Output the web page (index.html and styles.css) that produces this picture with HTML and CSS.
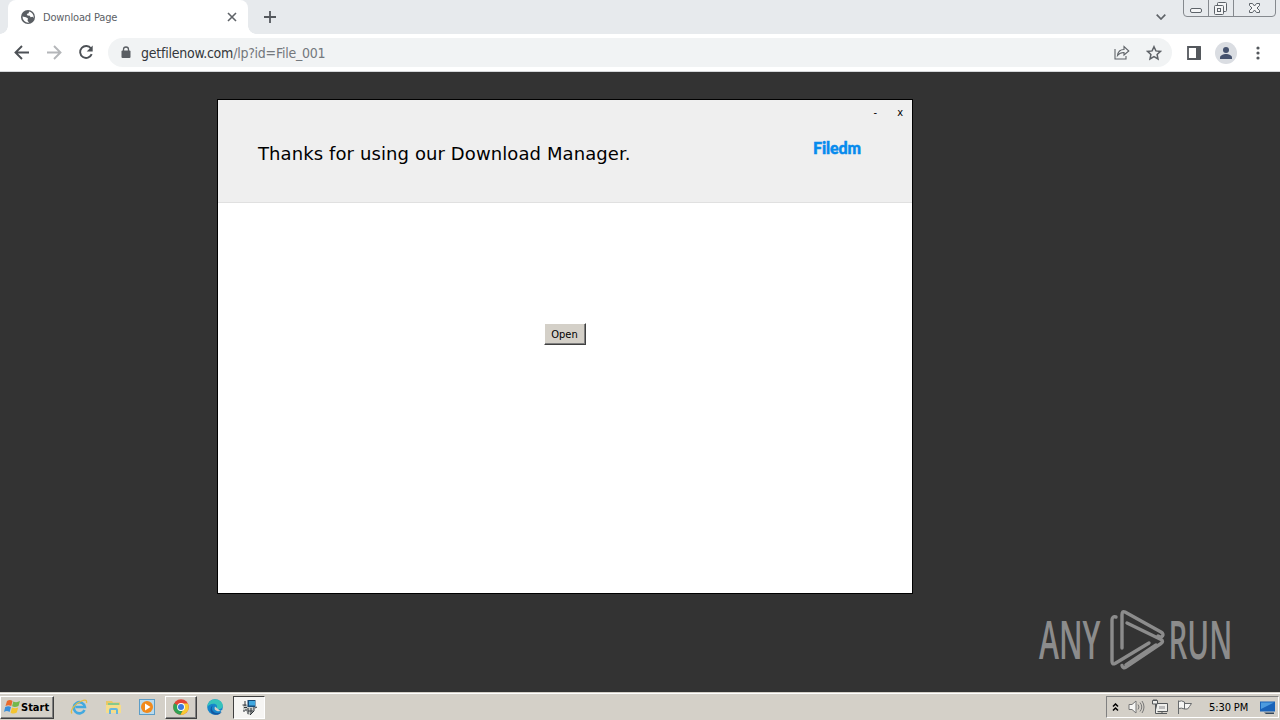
FILE: index.html
```
<!DOCTYPE html>
<html lang="en">
<head>
    <meta charset="UTF-8">
    <title>Download Page</title>
    <link rel="stylesheet" href="styles.css">
</head>
<body>
    <header class="tabstrip">
        <div class="tab">
            <svg class="globe" width="14" height="14" viewBox="0 0 14 14">
                <circle cx="7" cy="7" r="7" fill="#5a5e63"/>
                <path d="M1.500 6.500l3.500.7 2 1.200-.5 2L8 12.700A6 6 0 0 1 1.500 6.500zM8 1.500l-.3 1.700-2 .8.800 1.600 2.300.1.800 1.500 2-.5 1.100 1.200A6 6 0 0 0 8 1.500z" fill="#fff"/>
            </svg>
            <span class="tab-title">Download Page</span>
            <svg class="tab-close" width="10" height="10" viewBox="0 0 10 10"><path d="M1 1l8 8M9 1l-8 8" stroke="#5f6368" stroke-width="1.6"/></svg>
        </div>
        <svg class="new-tab" width="12" height="12" viewBox="0 0 12 12"><path d="M6 0v12M0 6h12" stroke="#54585d" stroke-width="1.8"/></svg>
        <svg class="tab-search" width="10" height="6" viewBox="0 0 10 6"><path d="M.7.7L5 5 9.300.7" fill="none" stroke="#5f6368" stroke-width="1.7"/></svg>
        <svg class="caption-buttons" width="94" height="18" viewBox="0 0 94 18">
            <path d="M.5 0v13q0 3.500 3.500 3.500h85q3.500 0 3.500-3.500V0M25.500 0v16M50.500 0v16" fill="none" stroke="#85898e"/>
            <g fill="#f4f5f6" stroke="#5d6369">
                <rect x="7.500" y="8.500" width="11" height="4" rx="1.500"/>
                <rect x="34.500" y="2.500" width="9" height="9" rx="1"/>
                <rect x="31.500" y="5.500" width="9" height="9" rx="1"/>
                <rect x="34.500" y="8.500" width="3" height="3"/>
                <path d="M66.500 3.500h3l2 2.500 2-2.500h3v2l-2.500 2.500 2.500 2.500v2h-3l-2-2.500-2 2.500h-3v-2l2.500-2.500-2.500-2.500z"/>
            </g>
        </svg>
    </header>
    <nav class="toolbar">
        <svg class="nav-icons" width="100" height="36" viewBox="0 0 100 36" fill="none" stroke-width="1.9">
            <path d="M29 17.500H16M22 11l-6.500 6.500L22 24" stroke="#4d5156"/>
            <path d="M47 17.500h13M54 11l6.500 6.500L54 24" stroke="#b4b6b9"/>
            <path d="M91 13.500a6 6 0 1 0 .7 5.700" stroke="#4d5156"/>
            <path d="M92.700 10.500v6h-6z" fill="#4d5156"/>
        </svg>
        <div class="omnibox">
            <svg class="lock" width="10" height="13" viewBox="0 0 10 13"><rect x=".5" y="4.500" width="9" height="7.500" rx="1" fill="#5a5e63"/><path d="M2.500 5V3.500a2.500 2.500 0 0 1 5 0V5" fill="none" stroke="#5a5e63" stroke-width="1.300"/></svg>
            <span class="url"><b>getfilenow.com</b>/lp?id=File_001</span>
            <svg class="share" width="16" height="15" viewBox="0 0 16 15" fill="none" stroke="#5f6368" stroke-width="1.100"><path d="M1 4v10h11v-3M3.500 10.500C4 6.500 6.500 4.500 10 4.500V1.500L14.800 6 10 10V7.500C7 7.500 5 8.500 3.500 10.500z"/></svg>
            <svg class="star" width="16" height="16" viewBox="0 0 16 16"><path d="M8 1.700l1.900 4.200 4.600.5-3.400 3.100.9 4.500-4-2.300-4 2.300.9-4.500L1.500 6.400l4.600-.5z" fill="none" stroke="#5f6368" stroke-width="1.500"/></svg>
        </div>
        <svg class="panel" width="14" height="14" viewBox="0 0 14 14"><path d="M1 1h12v12H1z" fill="none" stroke="#54585d" stroke-width="1.800"/><path d="M9 1h5v12H9z" fill="#54585d"/></svg>
        <svg class="avatar" width="22" height="22" viewBox="0 0 22 22"><circle cx="11" cy="11" r="11" fill="#dadde2"/><circle cx="11" cy="8" r="3" fill="#45526e"/><path d="M5 17v-1.500c0-2.300 3.500-3.500 6-3.500s6 1.200 6 3.500V17z" fill="#45526e"/></svg>
        <svg class="menu-dots" width="4" height="14" viewBox="0 0 4 14" fill="#54585d"><circle cx="2" cy="2" r="1.600"/><circle cx="2" cy="7" r="1.600"/><circle cx="2" cy="12" r="1.600"/></svg>
    </nav>
    <main class="desktop">
        <section class="dialog">
            <div class="dialog-head">
                <h1>Thanks for using our Download Manager.</h1>
                <div class="brand">Filedm</div>
                <div class="window-controls"><span>-</span><span>x</span></div>
            </div>
            <div class="dialog-body"><button>Open</button></div>
        </section>
        <svg class="watermark" width="194" height="64" viewBox="0 0 194 64">
            <g class="watermark-text">
                <text transform="translate(1 50) scale(.58 1)" textLength="106" lengthAdjust="spacingAndGlyphs">ANY</text>
                <text transform="translate(130.500 50) scale(.58 1)" textLength="110" lengthAdjust="spacingAndGlyphs">RUN</text>
            </g>
            <g fill="none" stroke="#8c8c8c" stroke-width="3.400" stroke-linejoin="round" stroke-linecap="round">
                <path d="M84 39V6Q84 1.500 87 3l36 20q3 2 1.500 4t-4.500 0"/>
                <path d="M78 8q-4-1-4 3v41q0 4 3 2.500L111 34"/>
                <path d="M89 14l34 16.500q3 2 0 4L88 58q-3 2-4-1.500"/>
                <path d="M88 56l30-20"/>
            </g>
        </svg>
    </main>
    <footer class="taskbar">
        <div class="start">
            <svg width="17" height="16" viewBox="0 0 17 16">
                <path d="M3 2q3-2 5.500 0L7.300 7Q4.500 5.300 1.500 7z" fill="#e96a2c"/>
                <path d="M9.300 2.500Q12.500 4 16 2l-1.500 5q-3.500 2-6.400.3z" fill="#73b84a"/>
                <path d="M1.200 8Q4.500 6.500 7 8l-1.400 5q-2.900-1.800-5.600 0z" fill="#398fdb"/>
                <path d="M8 8.500q3 1.500 6.200 0l-1.400 5q-3.300 2-6.200.2z" fill="#f4c430"/>
            </svg>
            Start
        </div>
        <div class="launchers">
            <span class="task">
                <svg width="18" height="18" viewBox="0 0 18 18" fill="none">
                    <path d="M14.500 12a5.600 5.600 0 1 1 .4-3H5.500" stroke="#43a9df" stroke-width="2.600"/>
                    <path d="M2 15.500C-.5 12.500 5 5.500 11.500 3 16 1.300 17 2.500 16.500 5" stroke="#e6bd43" stroke-width="1.300"/>
                </svg>
            </span>
            <span class="task">
                <svg width="17" height="16" viewBox="0 0 17 16">
                    <path d="M1 2h6l1 1.500h7V14H1z" fill="#e9c865"/>
                    <path d="M3 4h11v4H3z" fill="#85c98c"/><path d="M1 6h15v8H1z" fill="#f5dd8b"/>
                    <path d="M4 15v-4q0-2 2-2h5q2 0 2 2v4h-2v-4H6v4z" fill="#65b6df"/>
                </svg>
            </span>
            <span class="task">
                <svg width="16" height="16" viewBox="0 0 16 16">
                    <rect x=".5" y=".5" width="15" height="15" fill="#b9daed" stroke="#5c9dc7"/>
                    <circle cx="8" cy="8" r="6" fill="#f18a1c"/><path d="M6 4.500l5.500 3.500L6 11.500z" fill="#fff"/>
                </svg>
            </span>
            <span class="task raised">
                <svg width="16" height="16" viewBox="0 0 16 16">
                    <circle cx="8" cy="8" r="7.800" fill="#e24435"/>
                    <path d="M8 8L1.200 4.200A7.800 7.800 0 0 0 7.500 15.800L11 9z" fill="#30a254"/>
                    <path d="M8 4.500h6.900A7.800 7.800 0 0 1 7.500 15.800L11.200 9z" fill="#f8cb31"/>
                    <circle cx="8" cy="8" r="3.900" fill="#fff"/><circle cx="8" cy="8" r="3" fill="#3b78dc"/>
                </svg>
            </span>
            <span class="task">
                <svg width="16" height="16" viewBox="0 0 16 16">
                    <circle cx="8" cy="8" r="7.800" fill="#1686cb"/>
                    <path d="M.3 8C.8 3 4 .2 8 .2c4.500 0 7.800 3 7.800 6.500 0 3-4 4.300-6.300 2.800C11 7 9.500 4.700 6.500 4.700 3.500 4.700 1.500 6 .3 8z" fill="#36c3bb"/>
                    <path d="M6 6.500c-3 3 0 8 5.500 7.500 1.500 0 3-.8 3.500-1.500C12 18 4 16 3.500 11.500 3.300 9 4.500 7 6 6.500z" fill="#1358a2"/>
                    <path d="M8 7.500q-1.500 3.500 2 4.500 2.500.7 5-1l1 1-1 1.300z" fill="#d4d0c8"/>
                </svg>
            </span>
            <span class="task pressed">
                <svg width="17" height="17" viewBox="0 0 17 17">
                    <path d="M2 6h12l-1 5-3 5H7l-2-4H2z" fill="#c9ccc9"/>
                    <path d="M6.500 1h8v7h-8z" fill="#194b76"/><path d="M8 2h6v4.500H8z" fill="#40a7df"/>
                    <path d="M4 2v5M1.500 6h4M3 8.500h3M4 11h2M7 9v6M10 9v6M13 8v4M7 12h5M14 9l2-1M2 12h2M9 16l4-4" stroke="#30353a" fill="none"/>
                </svg>
            </span>
        </div>
        <div class="tray">
            <svg class="chevrons" width="7" height="9" viewBox="0 0 7 9"><path d="M1 3.500L3.500 1 6 3.500M1 7.500L3.500 5 6 7.500" fill="none" stroke="#000" stroke-width="1.500"/></svg>
            <svg width="17" height="16" viewBox="0 0 17 16" fill="none" stroke="#777"><path d="M1 5.500h3L8 2v12l-4-3.500H1z" fill="#f6f6f4"/><path d="M10 5.500q2 2.500 0 5M12 3.500q3.500 4.500 0 9M14 2q4 6 0 12"/></svg>
            <svg width="17" height="16" viewBox="0 0 17 16" fill="#eeeeeb" stroke="#55585a"><path d="M4.500 4.500h11v8h-11zM6 14.500h9M10 12.500v2"/><path d="M7 7h6v3H7z" fill="#bbb" stroke="none"/><path d="M.5 1.500h5v3.500h-5zM3.500 5v9.500H6M2 0v2M4 0v2"/></svg>
            <svg width="17" height="16" viewBox="0 0 17 16" fill="#f6f6f4" stroke="#686b6d"><path d="M2.500 15V1.500M2.500 2.500q3-1.500 6 .5v7q-3-1.500-6-.5M8.500 4.500h7l-2 3-2 2.500h-3"/></svg>
            <span class="clock">5:30 PM</span>
            <svg class="monitor" width="17" height="15" viewBox="0 0 17 15"><path d="M1 1.500h15v10H1z" fill="#1963b9"/><path d="M2 2.500h13L2 9z" fill="#4c9bdf"/><path d="M5 12.500h10v1.500H7z" fill="#31465c"/></svg>
        </div>
    </footer>
</body>
</html>
```
FILE: styles.css
```
*{
    box-sizing: border-box;
}
body{
    margin: 0;
    width: 1280px;
    height: 720px;
    overflow: hidden;
    display: flex;
    flex-direction: column;
    font-family: "DejaVu Sans Condensed", "DejaVu Sans", sans-serif;
    font-size: 11px;
    background: #333;
}
svg{
    display: block;
    flex: none;
}

/* browser chrome */
.tabstrip{
    height: 34px;
    padding-left: 8px;
    display: flex;
    align-items: flex-start;
    background: #e7eaed;
}
.tab{
    position: relative;
    width: 240px;
    height: 34px;
    padding: 0 11px 0 13px;
    display: flex;
    align-items: center;
    background: #fff;
    border-radius: 8px 8px 0 0;
}
.tab::before, .tab::after{
    content: "";
    position: absolute;
    bottom: 0;
    width: 8px;
    height: 8px;
}
.tab::before{
    left: -8px;
    background: radial-gradient(circle at 0 0, #e7eaed 7.5px, #fff 8px);
}
.tab::after{
    right: -8px;
    background: radial-gradient(circle at 100% 0, #e7eaed 7.5px, #fff 8px);
}
.tab-title{
    flex: 1;
    margin-left: 8px;
    color: #5c6066;
    letter-spacing: -0.15px;
}
.new-tab{
    margin: 11px 0 0 16px;
}
.tab-search{
    margin: 14px 17px 0 auto;
}
.caption-buttons{
    margin-right: 3px;
}
.toolbar{
    height: 38px;
    display: flex;
    align-items: center;
    background: #fff;
    border-bottom: 1px solid #d5d7da;
}
.nav-icons{
    margin-right: 8px;
}
.omnibox{
    width: 1064px;
    height: 29px;
    padding: 0 10px 0 13px;
    display: flex;
    align-items: center;
    background: #f1f3f4;
    border-radius: 15px;
}
.url{
    margin-left: 10px;
    font-size: 14px;
    color: #74787d;
    letter-spacing: -0.24px;
}
.url b{
    font-weight: normal;
    color: #34373b;
}
.share{
    margin-left: auto;
}
.star{
    margin-left: 16px;
}
.panel{
    margin-left: 15px;
}
.avatar{
    margin-left: 14px;
}
.menu-dots{
    margin-left: 19px;
}

/* page */
.desktop{
    position: relative;
    height: 620px;
    padding: 27px 0 0 217px;
}
.dialog{
    width: 696px;
    height: 495px;
    border: 1px solid #000;
    background: #fff;
}
.dialog-head{
    position: relative;
    height: 103px;
    padding: 0 51px 0 40px;
    display: flex;
    justify-content: space-between;
    background: #efefef;
    border-bottom: 1px solid #e0e0e0;
}
.dialog-head h1{
    margin: 43px 0 0;
    font: 18px/22px "DejaVu Sans", sans-serif;
    letter-spacing: 0.1px;
    color: #000;
}
.brand{
    margin-top: 38px;
    font: 900 16px/20px Lato, sans-serif;
    letter-spacing: -0.1px;
    color: #078bed;
    -webkit-text-stroke: 0.5px #078bed;
}
.window-controls{
    position: absolute;
    top: 6px;
    right: 9px;
    display: flex;
    gap: 20px;
}
.dialog-body{
    padding-top: 120px;
    display: flex;
    justify-content: center;
}
.dialog-body button{
    width: 42px;
    height: 22px;
    padding: 0 1px 0 0;
    font: inherit;
    color: #000;
    background: #d4d0c8;
    border: 1px solid;
    border-color: #fff #404040 #404040 #fff;
    box-shadow: inset -1px -1px #808080;
}
.watermark{
    position: absolute;
    left: 1038px;
    top: 537px;
    overflow: visible;
}
.watermark-text{
    font: 600 52px "Open Sans", sans-serif;
    fill: #8c8c8c;
}

/* taskbar */
.taskbar{
    height: 28px;
    padding: 2px 1px 0 0;
    display: flex;
    align-items: center;
    background: #d4d0c8;
    box-shadow: inset 0 1px #d4d0c8, inset 0 2px #fff;
}
.start{
    width: 54px;
    height: 23px;
    padding-left: 3px;
    display: flex;
    align-items: center;
    font-weight: bold;
    border: 1px solid;
    border-color: #fff #404040 #404040 #fff;
    box-shadow: inset -1px -1px #808080;
}
.launchers{
    margin-left: 9px;
    display: flex;
    gap: 2px;
}
.task{
    width: 32px;
    height: 23px;
    display: flex;
    align-items: center;
    justify-content: center;
}
.raised{
    border: 1px solid;
    border-color: #fff #404040 #404040 #fff;
    box-shadow: inset -1px -1px #808080;
}
.pressed{
    background: #f6f5f3;
    border: 1px solid;
    border-color: #404040 #fff #fff #404040;
}
.tray{
    width: 173px;
    height: 22px;
    margin-left: auto;
    padding: 0 2px 0 5px;
    display: flex;
    align-items: center;
    border: 1px solid;
    border-color: #808080 #fff #fff #808080;
}
.tray svg{
    margin-right: 7px;
}
.tray .chevrons{
    margin-right: 9px;
}
.clock{
    margin-left: 9px;
    letter-spacing: -0.1px;
}
.tray .monitor{
    margin: 0 0 0 auto;
}
```
